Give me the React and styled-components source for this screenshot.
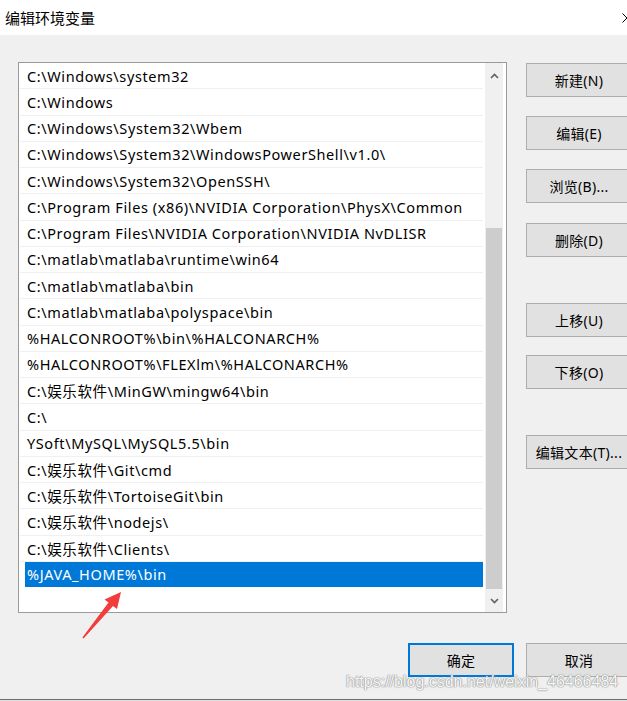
import styled, { createGlobalStyle } from "styled-components";

const GlobalStyle = createGlobalStyle`
	html, body {
		margin: 0;
		padding: 0;
		background: #dcdcdc;
	}
	* {
		box-sizing: border-box;
	}
`;

const uiFont = `"Noto Sans", "Noto Sans CJK SC", sans-serif`;

const Screen = styled.div`
	position: relative;
	width: 627px;
	height: 701px;
	overflow: hidden;
	font-family: ${uiFont};
`;
const Dialog = styled.div`
	width: 650px;
	height: 700px;
	background: #f0f0f0;
	border-bottom: 1px solid #707070;
	display: flex;
	flex-direction: column;
`;
const TitleBar = styled.div`
	height: 35px;
	background: #fff;
	display: flex;
	align-items: center;
	justify-content: space-between;
	padding-left: 5px;
	font-size: 15px;
	color: #000;
	font-family: "Noto Sans CJK SC", sans-serif;
`;
const CloseBox = styled.div`
	width: 46px;
	height: 35px;
	display: flex;
	align-items: center;
	justify-content: center;
`;
const Body = styled.div`
	display: flex;
	padding: 27px 18px 0 18px;
`;
const ListBox = styled.div`
	width: 489px;
	height: 551px;
	border: 1px solid #9a9a9a;
	background: #fff;
	display: flex;
`;
const Rows = styled.div`
	width: 466px;
	padding-left: 1px;
	overflow: hidden;
`;
const Row = styled.div`
	height: 26.25px;
	display: flex;
	align-items: center;
	border-bottom: 1px solid ${p => p.selected ? "transparent" : "#f0f0f0"};
	margin-right: 2px;
	padding-left: ${p => p.selected ? 0 : 7}px;
	font-size: 14.5px;
	letter-spacing: 0.6px;
	color: #000;
	white-space: nowrap;
`;
const Selected = styled.div`
	margin-left: 5px;
	width: 459px;
	height: 100%;
	background: #0078d7;
	color: #fff;
	display: flex;
	align-items: center;
	padding-left: 2px;
`;
const ScrollBar = styled.div`
	width: 18px;
	display: flex;
	flex-direction: column;
	background: #f0f0f0;
`;
const ScrollArrow = styled.div`
	height: ${p => p.h}px;
	display: flex;
	align-items: center;
	justify-content: center;
`;
const Track = styled.div`
	flex: 1;
	display: flex;
	flex-direction: column;
	justify-content: flex-end;
`;
const Thumb = styled.div`
	height: 361px;
	margin: 0 1px;
	background: #cdcdcd;
`;
const Side = styled.div`
	display: flex;
	flex-direction: column;
	margin-left: 19px;
	padding-top: 1px;
`;
const Button = styled.div`
	width: 106px;
	height: 34px;
	margin-top: ${p => p.gap || 0}px;
	background: #e1e1e1;
	border: ${p => p.primary ? "2px solid #0078d7" : "1px solid #adadad"};
	display: flex;
	align-items: center;
	justify-content: center;
	font-size: 14px;
	letter-spacing: 0.3px;
	color: #000;
	white-space: nowrap;
	user-select: none;
`;
const Footer = styled.div`
	display: flex;
	justify-content: flex-end;
	gap: 12px;
	padding: 30px 18px 0 0;
`;
const Watermark = styled.div`
	position: absolute;
	left: 346px;
	top: 673px;
	font-family: "Liberation Sans", Arial, sans-serif;
	font-size: 16px;
	color: rgba(255, 255, 255, 0.95);
	text-shadow: 0 0 1px #8a8a8a, 0 0 1px #9a9a9a, 0 0 2px #b0b0b0;
	pointer-events: none;
`;
const Pointer = styled.svg`
	position: absolute;
	left: 78px;
	top: 588px;
	pointer-events: none;
`;

const paths = [
	"C:\\Windows\\system32",
	"C:\\Windows",
	"C:\\Windows\\System32\\Wbem",
	"C:\\Windows\\System32\\WindowsPowerShell\\v1.0\\",
	"C:\\Windows\\System32\\OpenSSH\\",
	"C:\\Program Files (x86)\\NVIDIA Corporation\\PhysX\\Common",
	"C:\\Program Files\\NVIDIA Corporation\\NVIDIA NvDLISR",
	"C:\\matlab\\matlaba\\runtime\\win64",
	"C:\\matlab\\matlaba\\bin",
	"C:\\matlab\\matlaba\\polyspace\\bin",
	"%HALCONROOT%\\bin\\%HALCONARCH%",
	"%HALCONROOT%\\FLEXlm\\%HALCONARCH%",
	"C:\\娱乐软件\\MinGW\\mingw64\\bin",
	"C:\\",
	"YSoft\\MySQL\\MySQL5.5\\bin",
	"C:\\娱乐软件\\Git\\cmd",
	"C:\\娱乐软件\\TortoiseGit\\bin",
	"C:\\娱乐软件\\nodejs\\",
	"C:\\娱乐软件\\Clients\\",
	"%JAVA_HOME%\\bin",
];

const sideButtons = [
	{ label: "新建(N)", gap: 0 },
	{ label: "编辑(E)", gap: 19 },
	{ label: "浏览(B)...", gap: 19 },
	{ label: "删除(D)", gap: 20 },
	{ label: "上移(U)", gap: 46 },
	{ label: "下移(O)", gap: 18 },
	{ label: "编辑文本(T)...", gap: 46 },
];

const Chevron = ({ up }) => (
	<svg width="9" height="6" viewBox="0 0 9 6">
		<path d={up ? "M1 5 L4.5 1.5 L8 5" : "M1 1 L4.5 4.5 L8 1"} fill="none" stroke="#606060" strokeWidth="1.6" />
	</svg>
);

const App = () => {
	const selected = paths.length - 1;

	return (
		<Screen>
			<GlobalStyle />
			<Dialog>
				<TitleBar>
					<span>编辑环境变量</span>
					<CloseBox>
						<svg width="10" height="10" viewBox="0 0 10 10">
							<path d="M0.5 0.5 L9.5 9.5 M9.5 0.5 L0.5 9.5" stroke="#000" strokeWidth="1" />
						</svg>
					</CloseBox>
				</TitleBar>
				<Body>
					<ListBox>
						<Rows>
							{paths.map((p, i) => (
								<Row key={i} selected={i === selected}>
									{i === selected ? <Selected>{p}</Selected> : p}
								</Row>
							))}
						</Rows>
						<ScrollBar>
							<ScrollArrow h={26}><Chevron up /></ScrollArrow>
							<Track><Thumb /></Track>
							<ScrollArrow h={23}><Chevron /></ScrollArrow>
						</ScrollBar>
					</ListBox>
					<Side>
						{sideButtons.map(b => (
							<Button key={b.label} gap={b.gap}>{b.label}</Button>
						))}
					</Side>
				</Body>
				<Footer>
					<Button primary>确定</Button>
					<Button>取消</Button>
				</Footer>
			</Dialog>
			<Pointer width="50" height="56" viewBox="0 0 50 56">
				<polygon
					points="43,4 39,21 35,18 5.6,50.5 4.4,49.5 30.5,14.5 26.5,11.5"
					fill="#f23d3d"
				/>
			</Pointer>
			<Watermark>https://blog.csdn.net/weixin_46466484</Watermark>
		</Screen>
	);
};

export default App;
